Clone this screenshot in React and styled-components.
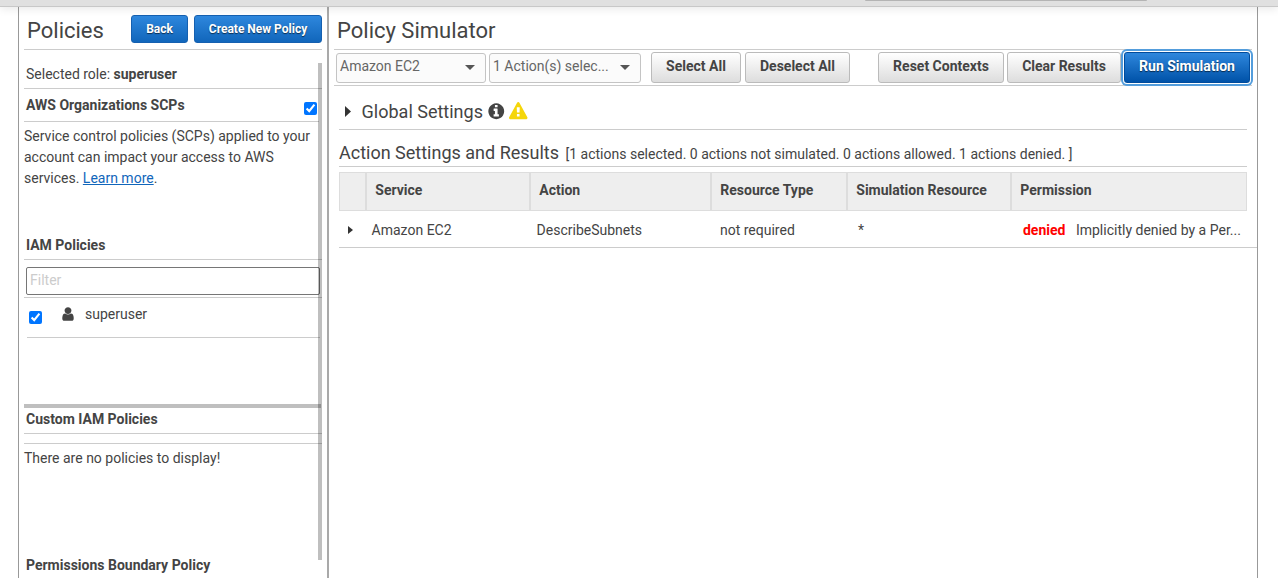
import React from "react";
import styled, { createGlobalStyle, css } from "styled-components";

const Global = createGlobalStyle`
  * { box-sizing: border-box; }
  html, body { margin: 0; padding: 0; }
  body {
    background: #fff;
    color: #444;
    font-family: Roboto, "Liberation Sans", sans-serif;
    font-size: 14px;
    line-height: 21px;
    overflow: hidden;
  }
  h1, h2, h3, p { margin: 0; font-weight: 400; }
`;

const Page = styled.div`
  height: 578px;
  display: flex;
  flex-direction: column;
  overflow: hidden;
`;

const TopBar = styled.header`
  position: relative;
  z-index: 2;
  flex: none;
  height: 7px;
  background: #e0e0e0;
  border-bottom: 1px solid #c8c8c8;
  box-shadow: 0 1px 10px rgba(0, 0, 0, 0.12);
  display: flex;
`;

const TopBarField = styled.div`
  margin-left: 865px;
  width: 282px;
  height: 1px;
  border-radius: 0 0 2px 2px;
  background: #b4b4b4;
`;

const Columns = styled.div`
  flex: 1;
  min-height: 0;
  display: flex;
  margin: 0 20px 0 18px;
  border: solid #999;
  border-width: 0 1px;
`;

const Sidebar = styled.aside`
  position: relative;
  flex: none;
  width: 310px;
  padding: 0 5px;
  border-right: 2px solid #a9a9a9;
  overflow: hidden;
`;

const Main = styled.main`
  flex: 1;
  min-width: 0;
  padding-left: 5px;
`;

const TitleRow = styled.div`
  display: flex;
  align-items: center;
  height: 43px;
  margin-right: ${(p) => p.$inset || 0}px;
  padding: 2px 0 0 3px;
  border-bottom: 1px solid #ccc;
`;

const Title = styled.h1`
  flex: 1;
  font-size: 22px;
  line-height: 30px;
  padding-top: 4px;
`;

const primary = css`
  color: #fff;
  background: linear-gradient(#2e87dd, #1166bb);
  border-color: #1560b0;
  text-shadow: 0 1px 1px rgba(0, 0, 0, 0.6);
`;

const Button = styled.button`
  flex: none;
  width: ${(p) => p.$width}px;
  height: 31px;
  padding: 0 0 3px;
  margin-left: ${(p) => p.$gap || 0}px;
  border: 1px solid #bbb;
  border-radius: 3px;
  background: linear-gradient(#fff, #ddd);
  color: #444;
  font: 700 14px/20px Roboto, sans-serif;
  white-space: nowrap;
  ${(p) => p.$primary && primary}
  ${(p) =>
    p.$small &&
    css`
      height: 28px;
      font-size: 12px;
      padding: 0;
    `}
  ${(p) =>
    p.$focused &&
    css`
      background: linear-gradient(#2e87dd, #0052a8);
      border-color: #004b9c;
      box-shadow: 0 0 0 1px #fff, 0 0 0 3px #539ddc;
      position: relative;
    `}
`;

const SectionHead = styled.div`
  display: flex;
  height: ${(p) => p.$height}px;
  padding: ${(p) => p.$top}px 2px 0 2px;
  margin-right: ${(p) => p.$inset || 0}px;
  border-bottom: 1px solid #ccc;
  font-weight: ${(p) => (p.$plain ? 400 : 700)};
  justify-content: space-between;
`;

const Paragraph = styled.p`
  height: ${(p) => p.$height}px;
  padding-top: 4px;
`;

const Link = styled.a`
  color: #1166bb;
  text-decoration: underline;
`;

const Check = styled.input.attrs({ type: "checkbox", defaultChecked: true })`
  width: 13px;
  height: 13px;
  margin: ${(p) => p.$margin};
  flex: none;
`;

const FilterRow = styled.div`
  height: 38px;
  padding: 7px 2px 0;
  border-bottom: 1px solid #ccc;
`;

const Filter = styled.input`
  display: block;
  width: 294px;
  height: 28px;
  padding: 0 3px 2px;
  border: 1px solid #767676;
  border-radius: 2px;
  font: 14px Roboto, sans-serif;
  &::placeholder { color: #ccc; }
`;

const PolicyItem = styled.div`
  display: flex;
  height: 40px;
  margin: 0 2px 0 3px;
  padding-top: 6px;
  border-bottom: 1px solid #ccc;
`;

const PersonIcon = styled.svg`
  width: 16px;
  height: 16px;
  margin: 2px 9px 0 18px;
  fill: #444;
`;

const Splitter = styled.div`
  height: 4px;
  margin: 66px 1px 0 0;
  background: #bfbfbf;
`;

const EmptyStrip = styled.div`
  height: 10px;
  border-bottom: 1px solid #ccc;
`;

const ScrollThumb = styled.div`
  position: absolute;
  top: 56px;
  right: 5px;
  width: 4px;
  height: 497px;
  background: rgba(0, 0, 0, 0.25);
`;

const Toolbar = styled.div`
  display: flex;
  align-items: center;
  height: 36px;
  margin-right: 5px;
  padding: 0 2px 0 2px;
  border-bottom: 1px solid #ccc;
`;

const Dropdown = styled.div`
  flex: none;
  width: ${(p) => p.$width}px;
  height: 30px;
  margin: 1px 3px 0 0;
  padding: 2px 10px 0 3px;
  display: flex;
  justify-content: space-between;
  border: 1px solid #c4c4c4;
  border-radius: 3px;
  background: #fbfbfb;
  color: #666;
`;

const Caret = styled.span`
  width: 0;
  height: 0;
  margin-top: 9px;
  border: solid transparent;
  border-width: 5px 5px 0;
  border-top-color: #555;
`;

const Spacer = styled.div`
  flex: 1;
`;

const Body = styled.div`
  padding-left: 5px;
`;

const Arrow = styled.svg`
  width: ${(p) => p.$width}px;
  height: ${(p) => p.$height}px;
  fill: #333;
  margin-bottom: 1px;
`;

const GlobalSettings = styled.div`
  display: flex;
  align-items: center;
  height: 44px;
  margin-right: 10px;
  padding: 9px 0 0 6px;
  border-bottom: 1px solid #ccc;
`;

const SubTitle = styled.h2`
  font-size: 18px;
  line-height: 24px;
  margin-left: ${(p) => p.$indent || 0}px;
`;

const StatusIcon = styled.svg`
  width: 18.5px;
  height: 18.5px;
  fill: ${(p) => p.$color};
  margin: 0 0 1px 4px;
`;

const ResultsHead = styled.div`
  display: flex;
  align-items: baseline;
  gap: 6.5px;
  height: 37px;
  padding-top: 11px;
  margin-right: 10px;
  border-bottom: 1px solid #ccc;
`;

const TableHead = styled.div`
  display: grid;
  grid-template-columns: 25px 164px 181px 136px 164px 1fr;
  height: 39px;
  margin: 5px 10px 0 0;
  background: #eee;
  border: 1px solid #ddd;
  font-weight: 700;
`;

const HeadCell = styled.div`
  padding: 7px 0 0 8.3px;
  border-left: ${(p) => (p.$first ? 0 : 2)}px solid #ddd;
`;

const TableRow = styled.div`
  display: grid;
  grid-template-columns: 32.6px 165px 183.4px 138px 165px 1fr;
  height: 37px;
  padding-top: 9px;
  border-bottom: 1px solid #ccc;
`;

const ArrowCell = styled.div`
  display: flex;
  align-items: center;
  height: 21px;
  padding-left: 9px;
`;

const Denied = styled.strong`
  color: #f00;
  margin-right: 10.5px;
`;

const Triangle = ({ width, height }) => (
  <Arrow $width={width} $height={height} viewBox="0 0 6 10" preserveAspectRatio="none">
    <path d="M0 0L6 5L0 10Z" />
  </Arrow>
);

export default function App() {
  return (
    <Page>
      <Global />
      <TopBar>
        <TopBarField />
      </TopBar>
      <Columns>
        <Sidebar>
          <TitleRow>
            <Title>Policies</Title>
            <Button $primary $small $width={57}>Back</Button>
            <Button $primary $small $width={128} $gap={6}>Create New Policy</Button>
          </TitleRow>
          <SectionHead $plain $height={39} $top={14}>
            <span>Selected role: <b>superuser</b></span>
          </SectionHead>
          <SectionHead $height={33} $top={6} $inset={3}>
            AWS Organizations SCPs
            <Check $margin="7px 0 0" />
          </SectionHead>
          <Paragraph $height={106}>
            Service control policies (SCPs) applied to your account can impact your access to AWS
            services. <Link>Learn more</Link>.
          </Paragraph>
          <SectionHead $height={32} $top={7}>IAM Policies</SectionHead>
          <FilterRow>
            <Filter placeholder="Filter" />
          </FilterRow>
          <PolicyItem>
            <Check $margin="7px 0 0 2px" />
            <PersonIcon viewBox="0 0 1792 1792">
              <path d="M1536 1399q0 109-62.5 187t-150.5 78h-854q-88 0-150.5-78t-62.5-187q0-85 8.5-160.5t31.5-152 58.5-131 94-89 134.5-34.5q131 128 313 128t313-128q76 0 134.5 34.5t94 89 58.5 131 31.5 152 8.5 160.5zm-256-887q0 159-112.5 271.5t-271.5 112.5-271.5-112.5-112.5-271.5 112.5-271.5 271.5-112.5 271.5 112.5 112.5 271.5z" />
            </PersonIcon>
            superuser
          </PolicyItem>
          <Splitter />
          <SectionHead $height={26} $top={1}>Custom IAM Policies</SectionHead>
          <EmptyStrip />
          <Paragraph $height={106}>There are no policies to display!</Paragraph>
          <SectionHead $height={33} $top={5}>Permissions Boundary Policy</SectionHead>
          <ScrollThumb />
        </Sidebar>
        <Main>
          <TitleRow $inset={5}>
            <Title>Policy Simulator</Title>
          </TitleRow>
          <Toolbar>
            <Dropdown $width={150}>Amazon EC2<Caret /></Dropdown>
            <Dropdown $width={152}>1 Action(s) selec...<Caret /></Dropdown>
            <Button $width={90} $gap={7}>Select All</Button>
            <Button $width={105} $gap={4}>Deselect All</Button>
            <Spacer />
            <Button $width={126}>Reset Contexts</Button>
            <Button $width={114} $gap={3}>Clear Results</Button>
            <Button $primary $focused $width={126} $gap={3}>Run Simulation</Button>
          </Toolbar>
          <Body>
            <GlobalSettings>
              <Triangle width={6} height={11} />
              <SubTitle $indent={10.6}>Global Settings</SubTitle>
              <StatusIcon viewBox="0 0 1792 1792" $color="#444">
                <path d="M1152 1376v-160q0-14-9-23t-23-9h-96v-512q0-14-9-23t-23-9h-320q-14 0-23 9t-9 23v160q0 14 9 23t23 9h96v320h-96q-14 0-23 9t-9 23v160q0 14 9 23t23 9h448q14 0 23-9t9-23zm-128-896v-160q0-14-9-23t-23-9h-192q-14 0-23 9t-9 23v160q0 14 9 23t23 9h192q14 0 23-9t9-23zm640 416q0 209-103 385.5t-279.5 279.5-385.5 103-385.5-103-279.5-279.5-103-385.5 103-385.5 279.5-279.5 385.5-103 385.5 103 279.5 279.5 103 385.5z" />
              </StatusIcon>
              <StatusIcon viewBox="0 0 1792 1792" $color="#f5d60a">
                <path d="M1024 1375v-190q0-14-9.5-23.5t-22.5-9.5h-192q-13 0-22.5 9.5t-9.5 23.5v190q0 14 9.5 23.5t22.5 9.5h192q13 0 22.5-9.5t9.5-23.5zm-2-374l18-459q0-12-10-19-13-11-24-11h-220q-11 0-24 11-10 7-10 21l17 457q0 10 10 16.5t24 6.5h185q14 0 23.5-6.5t10.5-16.5zm-14-934l768 1408q35 63-2 126-17 29-46.5 46t-63.5 17h-1536q-34 0-63.5-17t-46.5-46q-37-63-2-126l768-1408q17-31 47-49t65-18 65 18 47 49z" />
              </StatusIcon>
            </GlobalSettings>
            <ResultsHead>
              <SubTitle>Action Settings and Results</SubTitle>
              <span>[1 actions selected. 0 actions not simulated. 0 actions allowed. 1 actions denied. ]</span>
            </ResultsHead>
            <TableHead>
              <HeadCell $first />
              <HeadCell>Service</HeadCell>
              <HeadCell>Action</HeadCell>
              <HeadCell>Resource Type</HeadCell>
              <HeadCell>Simulation Resource</HeadCell>
              <HeadCell>Permission</HeadCell>
            </TableHead>
            <TableRow>
              <ArrowCell><Triangle width={5} height={8} /></ArrowCell>
              <span>Amazon EC2</span>
              <span>DescribeSubnets</span>
              <span>not required</span>
              <span>*</span>
              <span><Denied>denied</Denied>Implicitly denied by a Per...</span>
            </TableRow>
          </Body>
        </Main>
      </Columns>
    </Page>
  );
}
